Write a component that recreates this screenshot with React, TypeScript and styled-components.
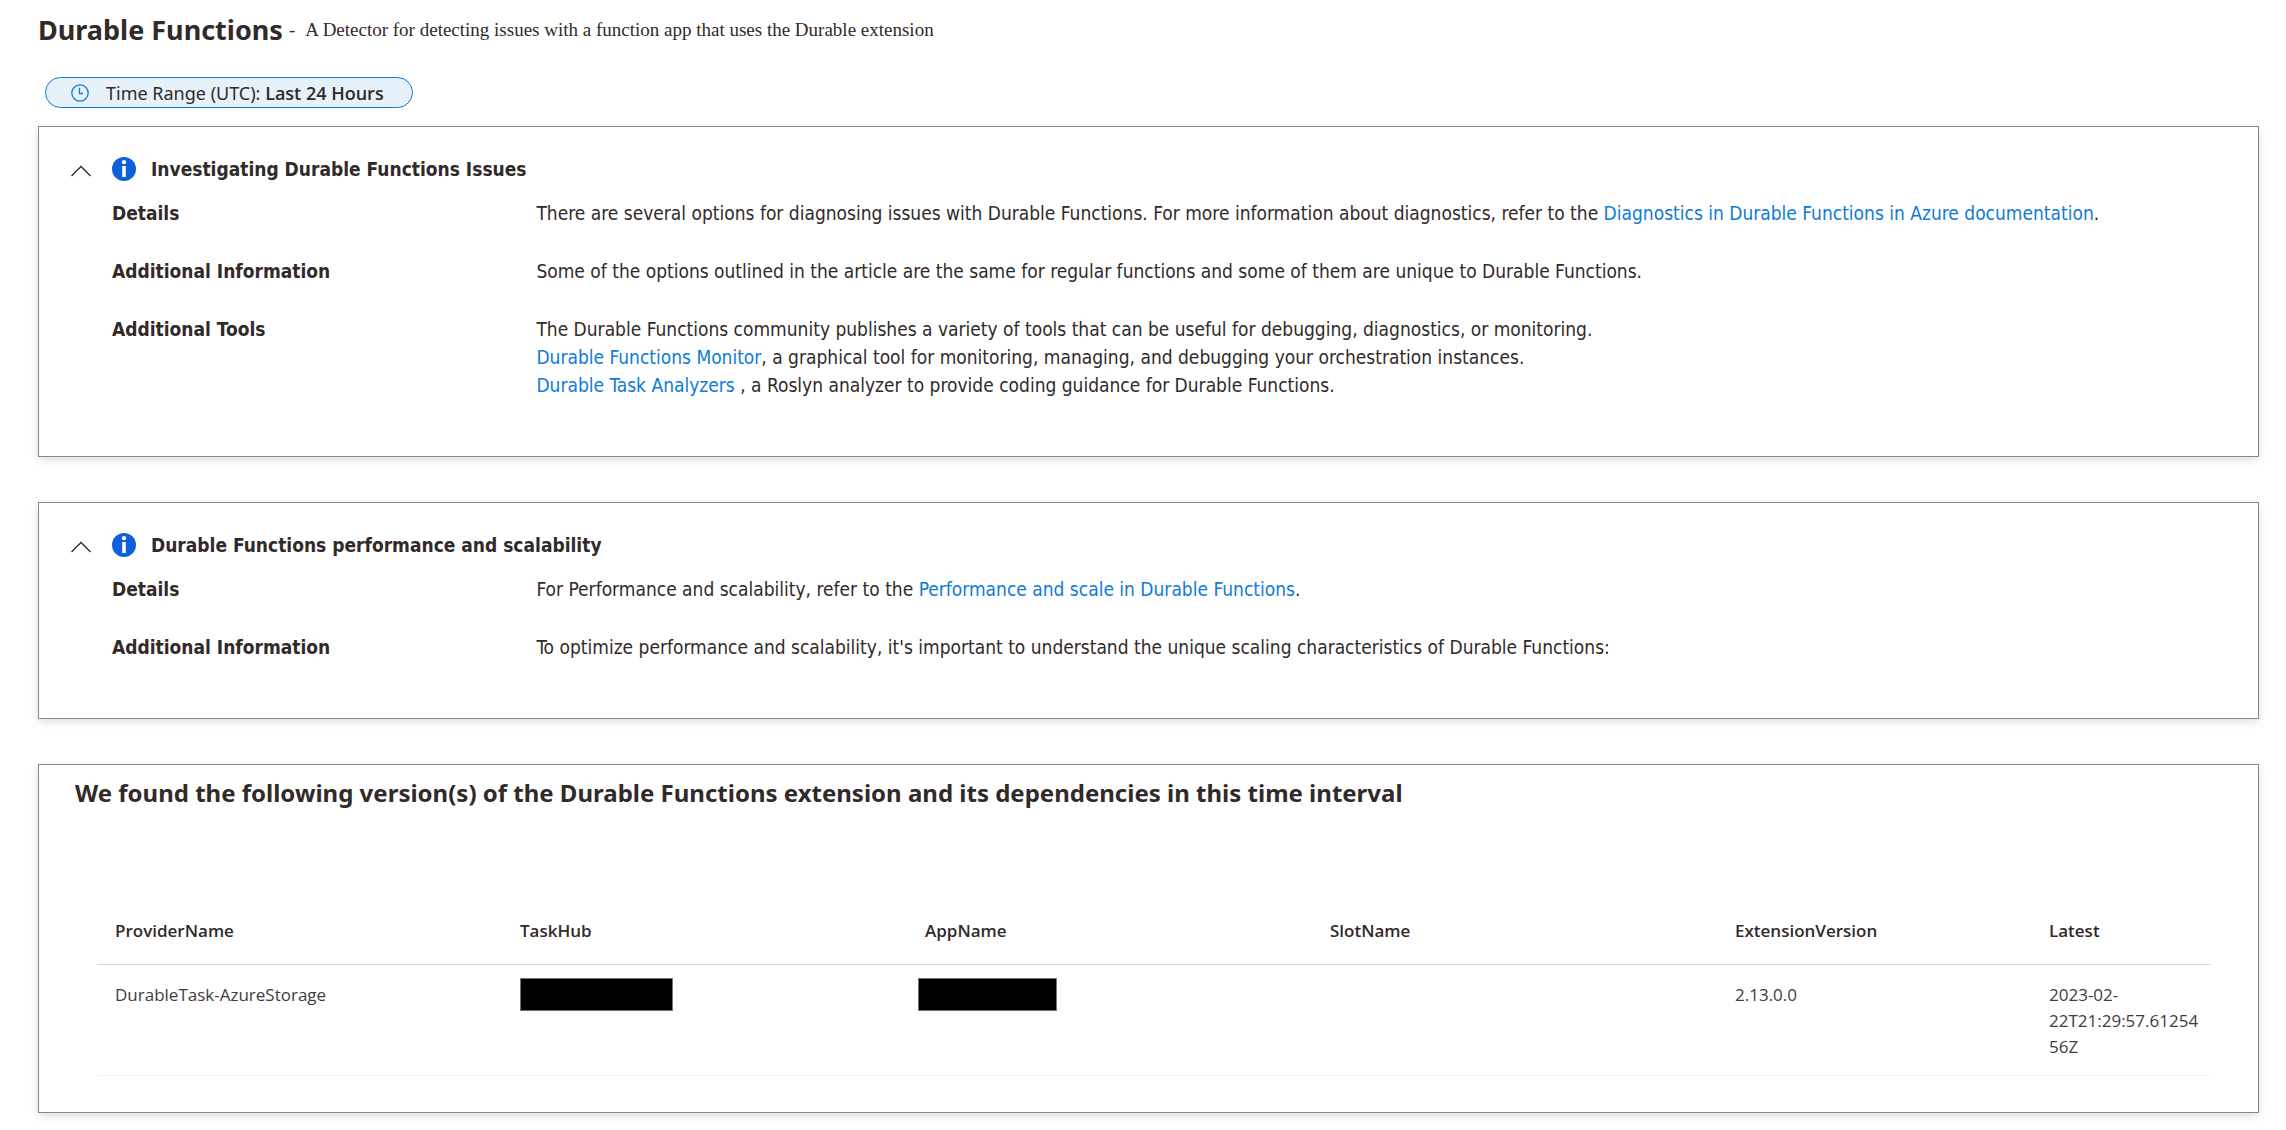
import React, { useState } from "react";
import styled, { createGlobalStyle } from "styled-components";

const tahoma = `"DejaVu Sans Condensed", "Noto Sans", sans-serif`;
const heading = `"Noto Sans", "Open Sans", sans-serif`;
const segoe = `"Open Sans", "Noto Sans", sans-serif`;
const times = `"Liberation Serif", serif`;

const ink = "#312a29";
const link = "#0f7bd6";

const GlobalStyle = createGlobalStyle`
  *, *::before, *::after { box-sizing: border-box; }
  body {
    margin: 0;
    background: #fff;
    color: ${ink};
    font-family: ${tahoma};
    font-size: 19px;
    line-height: 28px;
  }
`;

const Page = styled.main`
  padding: 12px 27px 16px 38px;
`;

const PageHeader = styled.header`
  display: flex;
  align-items: center;
  gap: 6px;
`;

const PageTitle = styled.h1`
  margin: 0;
  font: 700 27px/36px ${heading};
`;

const Description = styled.p`
  margin: 0;
  display: flex;
  gap: 10px;
  font: 400 19px/36px ${times};
`;

const TimeRangePill = styled.button`
  display: flex;
  align-items: center;
  gap: 16px;
  height: 31px;
  margin: 29px 0 18px 7px;
  padding: 0 28px 0 24px;
  border: 1px solid ${link};
  border-radius: 16px;
  background: #e6f1fa;
  color: ${ink};
  font: 400 18px/28px ${heading};
  cursor: pointer;

  strong {
    font-family: ${segoe};
    font-weight: 600;
  }
`;

const CardStack = styled.div`
  display: flex;
  flex-direction: column;
  gap: 45px;
`;

const Card = styled.section`
  border: 1px solid #8a8886;
  background: #fff;
  box-shadow: 0 3px 8px rgba(0, 0, 0, 0.13);
`;

const InsightCard = styled(Card)`
  padding: 28px 24px 27px 31px;
`;

const InsightToggle = styled.button`
  display: flex;
  align-items: center;
  width: 100%;
  padding: 0;
  border: 0;
  background: none;
  color: inherit;
  font: 700 19px/28px ${tahoma};
  text-align: left;
  cursor: pointer;
`;

const ChevronIcon = styled.svg<{ $open: boolean }>`
  flex: none;
  margin: 4px 20px 0 0;
  transform: ${(p) => (p.$open ? "none" : "rotate(180deg)")};
`;

const InfoIcon = styled.svg`
  flex: none;
  margin-right: 15px;
`;

const DetailList = styled.dl`
  display: grid;
  grid-template-columns: minmax(0, 1fr) minmax(0, 4fr);
  row-gap: 30px;
  margin: 16px 0 30px 42px;
`;

const DetailLabel = styled.dt`
  font-weight: 700;
`;

const DetailText = styled.dd`
  margin: 0;
`;

const TextLink = styled.a`
  color: ${link};
  text-decoration: none;
`;

const TableCard = styled(Card)`
  padding: 10px 47px 36px 36px;
`;

const TableTitle = styled.h2`
  margin: 0 0 86px;
  font: 700 24px/36px ${heading};
`;

const TableFrame = styled.div`
  padding-left: 22px;
`;

const DataTable = styled.table`
  width: 100%;
  table-layout: fixed;
  border-collapse: separate;
  border-spacing: 0;
  font: 400 17px/26px ${segoe};
`;

const Column = styled.col<{ $width?: number }>`
  width: ${(p) => (p.$width ? `${p.$width}px` : "auto")};
`;

const HeadCell = styled.th`
  padding: 21px 12px 20px 18px;
  border-bottom: 1px solid #d8d8da;
  font-weight: 600;
  text-align: left;
`;

const Cell = styled.td`
  padding: 17px 12px 15px 18px;
  border-bottom: 1px solid #f3f2f1;
  color: #3f3c3b;
  vertical-align: top;
  overflow-wrap: anywhere;
`;

const RedactedCell = styled(Cell)<{ $inset: number }>`
  padding: 13px 12px 15px ${(p) => p.$inset}px;
`;

const Redaction = styled.div<{ $width: number }>`
  width: ${(p) => p.$width}px;
  height: 33px;
  border: 1px solid #6f7573;
  background: #000;
`;

function ClockIcon() {
  return (
    <svg width="20" height="20" viewBox="0 0 20 20" fill="none" stroke={link} aria-hidden="true">
      <circle cx="10" cy="10" r="8.2" strokeWidth="1.3" />
      <path d="M9.5 4.8V10.5H13" strokeWidth="1.3" />
    </svg>
  );
}

function Insight({ title, children }: { title: string; children: React.ReactNode }) {
  const [open, setOpen] = useState(true);
  return (
    <InsightCard>
      <InsightToggle type="button" aria-expanded={open} onClick={() => setOpen(!open)}>
        <ChevronIcon $open={open} width="22" height="14" viewBox="0 0 22 14" fill="none" aria-hidden="true">
          <path d="M1.5 12 11 2.5l9.5 9.5" stroke={ink} strokeWidth="1.3" />
        </ChevronIcon>
        <InfoIcon width="24" height="24" viewBox="0 0 24 24" aria-hidden="true">
          <circle cx="12" cy="12" r="12" fill="#105fdb" />
          <circle cx="12" cy="5.2" r="2.1" fill="#fff" />
          <rect x="10.2" y="9" width="3.6" height="11" fill="#fff" />
        </InfoIcon>
        <span>{title}</span>
      </InsightToggle>
      {open && <DetailList>{children}</DetailList>}
    </InsightCard>
  );
}

export default function App() {
  return (
    <>
      <GlobalStyle />
      <Page>
        <PageHeader>
          <PageTitle>Durable Functions</PageTitle>
          <Description>
            <span>-</span>
            <span>A Detector for detecting issues with a function app that uses the Durable extension</span>
          </Description>
        </PageHeader>

        <TimeRangePill type="button">
          <ClockIcon />
          <span>
            Time Range (UTC): <strong>Last 24 Hours</strong>
          </span>
        </TimeRangePill>

        <CardStack>
          <Insight title="Investigating Durable Functions Issues">
            <DetailLabel>Details</DetailLabel>
            <DetailText>
              There are several options for diagnosing issues with Durable Functions. For more information about
              diagnostics, refer to the{" "}
              <TextLink href="#diagnostics">Diagnostics in Durable Functions in Azure documentation</TextLink>.
            </DetailText>
            <DetailLabel>Additional Information</DetailLabel>
            <DetailText>
              Some of the options outlined in the article are the same for regular functions and some of them are
              unique to Durable Functions.
            </DetailText>
            <DetailLabel>Additional Tools</DetailLabel>
            <DetailText>
              The Durable Functions community publishes a variety of tools that can be useful for debugging,
              diagnostics, or monitoring.
              <br />
              <TextLink href="#monitor">Durable Functions Monitor</TextLink>, a graphical tool for monitoring,
              managing, and debugging your orchestration instances.
              <br />
              <TextLink href="#analyzers">Durable Task Analyzers</TextLink> , a Roslyn analyzer to provide coding
              guidance for Durable Functions.
            </DetailText>
          </Insight>

          <Insight title="Durable Functions performance and scalability">
            <DetailLabel>Details</DetailLabel>
            <DetailText>
              For Performance and scalability, refer to the{" "}
              <TextLink href="#performance">Performance and scale in Durable Functions</TextLink>.
            </DetailText>
            <DetailLabel>Additional Information</DetailLabel>
            <DetailText>
              To optimize performance and scalability, it's important to understand the unique scaling
              characteristics of Durable Functions:
            </DetailText>
          </Insight>

          <TableCard>
            <TableTitle>
              We found the following version(s) of the Durable Functions extension and its dependencies in this time
              interval
            </TableTitle>
            <TableFrame>
              <DataTable>
                <colgroup>
                  <Column />
                  <Column />
                  <Column />
                  <Column />
                  <Column $width={314} />
                  <Column $width={180} />
                </colgroup>
                <thead>
                  <tr>
                    <HeadCell scope="col">ProviderName</HeadCell>
                    <HeadCell scope="col">TaskHub</HeadCell>
                    <HeadCell scope="col">AppName</HeadCell>
                    <HeadCell scope="col">SlotName</HeadCell>
                    <HeadCell scope="col">ExtensionVersion</HeadCell>
                    <HeadCell scope="col">Latest</HeadCell>
                  </tr>
                </thead>
                <tbody>
                  <tr>
                    <Cell>DurableTask-AzureStorage</Cell>
                    <RedactedCell $inset={18}>
                      <Redaction $width={153} />
                    </RedactedCell>
                    <RedactedCell $inset={11}>
                      <Redaction $width={139} />
                    </RedactedCell>
                    <Cell />
                    <Cell>2.13.0.0</Cell>
                    <Cell>2023-02-22T21:29:57.6125456Z</Cell>
                  </tr>
                </tbody>
              </DataTable>
            </TableFrame>
          </TableCard>
        </CardStack>
      </Page>
    </>
  );
}
